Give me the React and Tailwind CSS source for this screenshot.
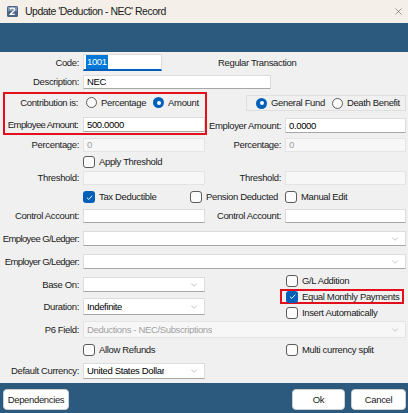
import React from 'react';
import { ChevronDown, X } from 'lucide-react';

// Win11 style radio
const Radio = ({ checked, label }) => (
  <div className="flex items-center gap-[4px]">
    <span
      className={`w-[11px] h-[11px] rounded-full flex items-center justify-center shrink-0 ${
        checked ? 'bg-[#005fb8]' : 'bg-[#fbfbfb] border border-[#5c5c5c]'
      }`}
    >
      {checked && <span className="w-[4px] h-[4px] rounded-full bg-white" />}
    </span>
    <span>{label}</span>
  </div>
);

// Win11 style checkbox
const Check = ({ checked, label }) => (
  <div className="flex items-center gap-[4px]">
    <span
      className={`w-[12px] h-[12px] rounded-[3px] flex items-center justify-center shrink-0 ${
        checked ? 'bg-[#005fb8]' : 'bg-[#fbfbfb] border border-[#5c5c5c]'
      }`}
    >
      {checked && (
        <svg width="9" height="9" viewBox="0 0 12 12">
          <polyline points="2.5,6.2 5,8.6 9.6,3.6" fill="none" stroke="white" strokeWidth="1.3" />
        </svg>
      )}
    </span>
    <span>{label}</span>
  </div>
);

const Box = ({ className = '', disabled, children }) => (
  <div
    className={`h-full flex items-center px-[3px] border ${
      disabled
        ? 'bg-[#f7f7f7] border-[#e4e4e4] text-[#a0a0a0]'
        : 'bg-white border-[#dcdcdc] border-b-[#a6a6a6] text-black'
    } ${className}`}
  >
    {children}
  </div>
);

const Select = ({ className = '', disabled, value }) => (
  <Box disabled={disabled} className={`justify-between ${className}`}>
    <span className="truncate">{value}</span>
    <ChevronDown size={10} strokeWidth={1.2} className="text-[#8a8a8a] shrink-0 mr-[2px]" />
  </Box>
);

// right-aligned label that overflows to the left instead of wrapping
const Label = ({ w = 'w-[79px]', tight, children }) => (
  <div className={`${w} shrink-0 flex justify-end`}>
    <span className={tight ? 'tracking-[-0.6px]' : ''}>{children}</span>
  </div>
);

const LeftField = ({ label, children }) => (
  <div className="w-[207px] shrink-0 flex items-center h-full">
    <Label>{label}</Label>
    <div className="ml-[4px] w-[122px] h-full">{children}</div>
  </div>
);

const RightField = ({ label, children }) => (
  <div className="flex items-center h-full">
    <Label w="w-[74px]">{label}</Label>
    <div className="ml-[4px] w-[121px] h-full">{children}</div>
  </div>
);

export default function App() {
  return (
    <div className="w-[408px] h-[413px] flex flex-col bg-[#f0f0f0] overflow-hidden whitespace-nowrap font-['Liberation_Sans',Arial,sans-serif] text-[9.5px] tracking-[-0.35px] text-[#1a1a1a] leading-none">
      {/* Title bar */}
      <div className="h-[23px] shrink-0 bg-[#f4f0e9] flex items-center">
        <svg className="ml-[7px]" width="11" height="11" viewBox="0 0 11 11">
          <rect x="0" y="0" width="11" height="11" rx="1.5" fill="#4b6584" />
          <rect x="1" y="1" width="9" height="4" fill="#7f97b3" />
          <path d="M3 3.2 C4 1.8 7.5 1.8 7.6 3.6 C7.7 5 5 6 3.2 8.4 L7.8 8.4" fill="none" stroke="white" strokeWidth="1.3" />
        </svg>
        <span className="ml-[7px] text-[10.5px] tracking-[-0.5px] text-[#1b1b1b]">Update 'Deduction - NEC' Record</span>
        <X size={11} strokeWidth={1} className="ml-auto mr-[4px] text-[#333]" />
      </div>
      {/* Toolbar band */}
      <div className="h-[29px] shrink-0 bg-[#2b5a7e]" />

      {/* Body */}
      <div className="flex flex-col">
        {/* Code */}
        <div className="mt-[2px] h-[17px] flex items-center">
          <Label>Code:</Label>
          <div className="ml-[4px] w-[79px] h-full bg-white border border-[#dcdcdc] border-b-2 border-b-[#005fb8] flex items-center px-[2px]">
            <span className="bg-[#0078d7] text-white px-[1px] py-[2px]">1001</span>
          </div>
          <div className="ml-[56px]">Regular Transaction</div>
        </div>

        {/* Description */}
        <div className="mt-[4px] h-[14px] flex items-center">
          <Label>Description:</Label>
          <div className="ml-[4px] w-[188px] h-full">
            <Box>NEC</Box>
          </div>
        </div>

        {/* Contribution / fund */}
        <div className="mt-[3px] h-[43px] flex items-start">
          <div className="ml-[3px] w-[204px] h-[43px] border-2 border-[#e3101b] flex flex-col">
            <div className="h-[17px] flex items-center">
              <Label w="w-[73px]">Contribution is:</Label>
              <div className="ml-[8px] flex items-center gap-[7px]">
                <Radio label="Percentage" />
                <Radio checked label="Amount" />
              </div>
            </div>
            <div className="mt-[6px] h-[15px] flex items-center">
              <Label w="w-[73px]" tight>Employee Amount:</Label>
              <div className="ml-[5px] w-[122px] h-full">
                <Box>500.0000</Box>
              </div>
            </div>
          </div>
          <div className="flex flex-col">
            <div className="ml-[39px] mt-[3px] w-[160px] h-[16px] border border-[#dedede] flex items-center pl-[9px] gap-[7px]">
              <Radio checked label="General Fund" />
              <Radio label="Death Benefit" />
            </div>
            <div className="mt-[7px] h-[15px]">
              <RightField label="Employer Amount:">
                <Box>0.0000</Box>
              </RightField>
            </div>
          </div>
        </div>

        {/* Percentage */}
        <div className="mt-[3px] h-[14px] flex items-center">
          <LeftField label="Percentage:">
            <Box disabled>0</Box>
          </LeftField>
          <RightField label="Percentage:">
            <Box disabled>0</Box>
          </RightField>
        </div>

        {/* Apply threshold */}
        <div className="mt-[3px] h-[13px] flex items-center pl-[83px]">
          <Check label="Apply Threshold" />
        </div>

        {/* Threshold */}
        <div className="mt-[3px] h-[14px] flex items-center">
          <LeftField label="Threshold:">
            <Box disabled />
          </LeftField>
          <RightField label="Threshold:">
            <Box disabled />
          </RightField>
        </div>

        {/* Tax flags */}
        <div className="mt-[5px] h-[14px] flex items-center">
          <div className="ml-[83px] w-[107px]">
            <Check checked label="Tax Deductible" />
          </div>
          <div className="w-[95px]">
            <Check label="Pension Deducted" />
          </div>
          <Check label="Manual Edit" />
        </div>

        {/* Control account */}
        <div className="mt-[5px] h-[14px] flex items-center">
          <LeftField label="Control Account:">
            <Box />
          </LeftField>
          <RightField label="Control Account:">
            <Box />
          </RightField>
        </div>

        {/* Employee G/Ledger */}
        <div className="mt-[8px] h-[15px] flex items-center">
          <Label tight>Employee G/Ledger:</Label>
          <div className="ml-[4px] w-[323px] h-full">
            <Select value="" />
          </div>
        </div>

        {/* Employer G/Ledger */}
        <div className="mt-[8px] h-[15px] flex items-center">
          <Label tight>Employer G/Ledger:</Label>
          <div className="ml-[4px] w-[323px] h-full">
            <Select value="" />
          </div>
        </div>

        {/* Base on / Duration + payment flags */}
        <div className="flex items-start">
          <div className="w-[207px] shrink-0 flex flex-col">
            <div className="mt-[8px] h-[15px]">
              <LeftField label="Base On:">
                <Select value="" />
              </LeftField>
            </div>
            <div className="mt-[6px] h-[17px]">
              <LeftField label="Duration:">
                <Select value="Indefinite" />
              </LeftField>
            </div>
          </div>
          <div className="flex flex-col">
            <div className="mt-[5px] h-[13px] ml-[79px] flex items-center">
              <Check label="G/L Addition" />
            </div>
            <div className="mt-[2px] ml-[73px] w-[124px] h-[15px] border-2 border-[#e3101b] flex items-center pl-[4px]">
              <Check checked label="Equal Monthly Payments" />
            </div>
            <div className="mt-[2px] h-[13px] ml-[79px] flex items-center">
              <Check label="Insert Automatically" />
            </div>
          </div>
        </div>

        {/* P6 field */}
        <div className="mt-[2px] h-[17px] flex items-center">
          <Label>P6 Field:</Label>
          <div className="ml-[4px] w-[323px] h-full">
            <Select disabled value="Deductions - NEC/Subscriptions" />
          </div>
        </div>

        {/* Refunds */}
        <div className="mt-[5px] h-[13px] flex items-center">
          <div className="ml-[83px] w-[203px]">
            <Check label="Allow Refunds" />
          </div>
          <Check label="Multi currency split" />
        </div>

        {/* Default currency */}
        <div className="mt-[7px] h-[16px] flex items-center">
          <LeftField label="Default Currency:">
            <Select value="United States Dollar" />
          </LeftField>
        </div>
      </div>

      {/* Footer */}
      <div className="mt-auto h-[30px] shrink-0 bg-[#2b5a7e] flex items-start pt-[6px] px-[3px]">
        <button className="w-[66px] h-[21px] bg-white border border-[#d0d0d0] rounded-[4px]">Dependencies</button>
        <button className="ml-auto w-[53px] h-[21px] bg-white border border-[#d0d0d0] rounded-[4px]">Ok</button>
        <button className="ml-[6px] mr-[-1px] w-[55px] h-[21px] bg-white border border-[#d0d0d0] rounded-[4px]">Cancel</button>
      </div>
    </div>
  );
}
